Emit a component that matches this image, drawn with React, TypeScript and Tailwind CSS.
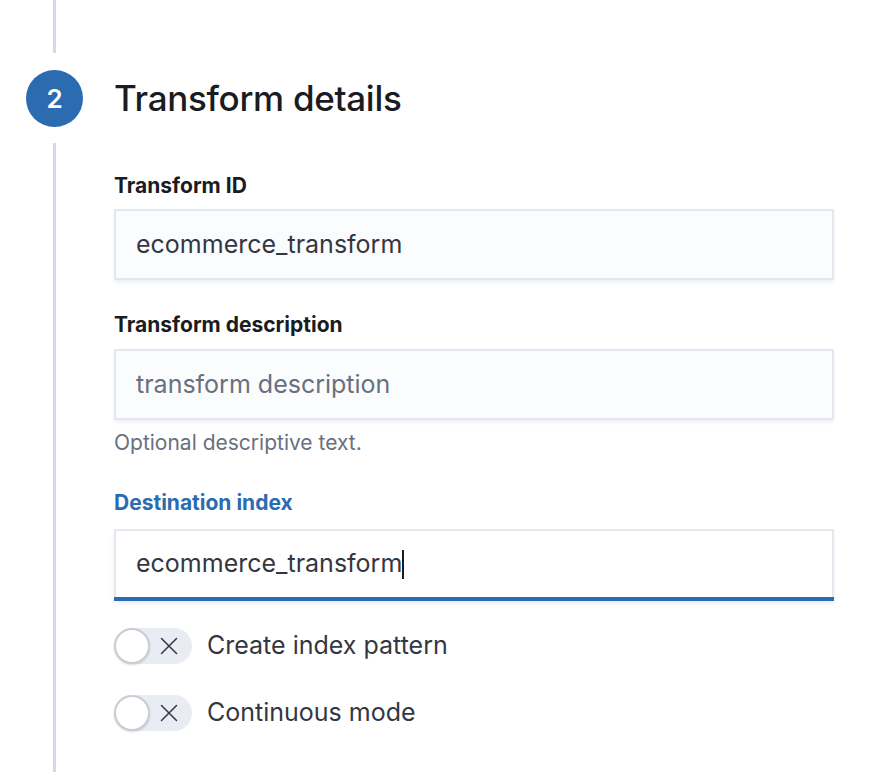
import React from 'react';

const font = { fontFamily: 'Inter, "Noto Sans", sans-serif' };

interface ToggleProps {
  label: string;
}

const Toggle: React.FC<ToggleProps> = ({ label }) => (
  <div className="flex items-center h-[36px]">
    <div className="relative w-[78px] h-[36px] rounded-full bg-[#e9ecf2]">
      <div className="absolute left-0 top-0 w-[36px] h-[36px] rounded-full bg-white border-2 border-[#c9ced6] shadow-[0_1px_2px_rgba(0,0,0,0.15)]" />
      <svg className="absolute left-[46px] top-[9px]" width="18" height="18" viewBox="0 0 18 18">
        <path d="M1.5 1.5 L16.5 16.5 M16.5 1.5 L1.5 16.5" stroke="#343741" strokeWidth="1.5" strokeLinecap="round" />
      </svg>
    </div>
    <span className="ml-[15px] text-[25px] text-[#343741]">{label}</span>
  </div>
);

export default function App() {
  return (
    <div className="w-[890px] h-[772px] bg-white overflow-hidden" style={font}>
      {/* previous step tail */}
      <div className="ml-[53px] h-[53px] w-[3px] bg-[#d3dae6]" />

      {/* step header */}
      <div className="flex items-center mt-[17px] ml-[26px] h-[57px]">
        <div className="w-[57px] h-[57px] rounded-full bg-[#2b6cb0] flex items-center justify-center text-white text-[26px] font-semibold">
          2
        </div>
        <h2 className="ml-[31px] text-[35px] font-medium text-[#1a1c21] tracking-[-0.3px]">Transform details</h2>
      </div>

      {/* step body */}
      <div className="mt-[16px] ml-[53px] border-l-[3px] border-[#d3dae6] pl-[58px] pt-[29px] h-[640px]">
        <div className="w-[720px]">
          <label className="block text-[21px] font-bold text-[#1a1c21] leading-[28px]">Transform ID</label>
          <div className="mt-[9px] h-[71px] bg-[#fbfcfd] border-2 border-[#e3e7ef] shadow-[0_3px_4px_-1px_rgba(152,162,179,0.2)] flex items-center px-[20px] text-[25px] text-[#343741]">
            ecommerce_transform
          </div>

          <label className="block mt-[31px] text-[21px] font-bold text-[#1a1c21] leading-[28px]">Transform description</label>
          <div className="mt-[10px] h-[71px] bg-[#fbfcfd] border-2 border-[#e3e7ef] shadow-[0_3px_4px_-1px_rgba(152,162,179,0.2)] flex items-center px-[20px] text-[25px] text-[#69707d]">
            transform description
          </div>
          <p className="mt-[10px] text-[21px] text-[#69707d] leading-[26px]">Optional descriptive text.</p>

          <label className="block mt-[33px] text-[21px] font-bold text-[#2b6cb0] leading-[28px]">Destination index</label>
          <div className="mt-[12px] h-[72px] bg-white border-2 border-b-0 border-[#e3e7ef] shadow-[0_3px_4px_-1px_rgba(152,162,179,0.25)] flex flex-col">
            <div className="flex-1 flex items-center px-[20px] text-[25px] text-[#343741]">
              ecommerce_transform
              <span className="inline-block w-[2px] h-[29px] bg-[#1a1c21]" />
            </div>
            <div className="h-[4px] bg-[#2b6cb0] -mx-[2px]" />
          </div>

          <div className="mt-[27px] flex flex-col gap-[31px]">
            <Toggle label="Create index pattern" />
            <Toggle label="Continuous mode" />
          </div>
        </div>
      </div>
    </div>
  );
}
